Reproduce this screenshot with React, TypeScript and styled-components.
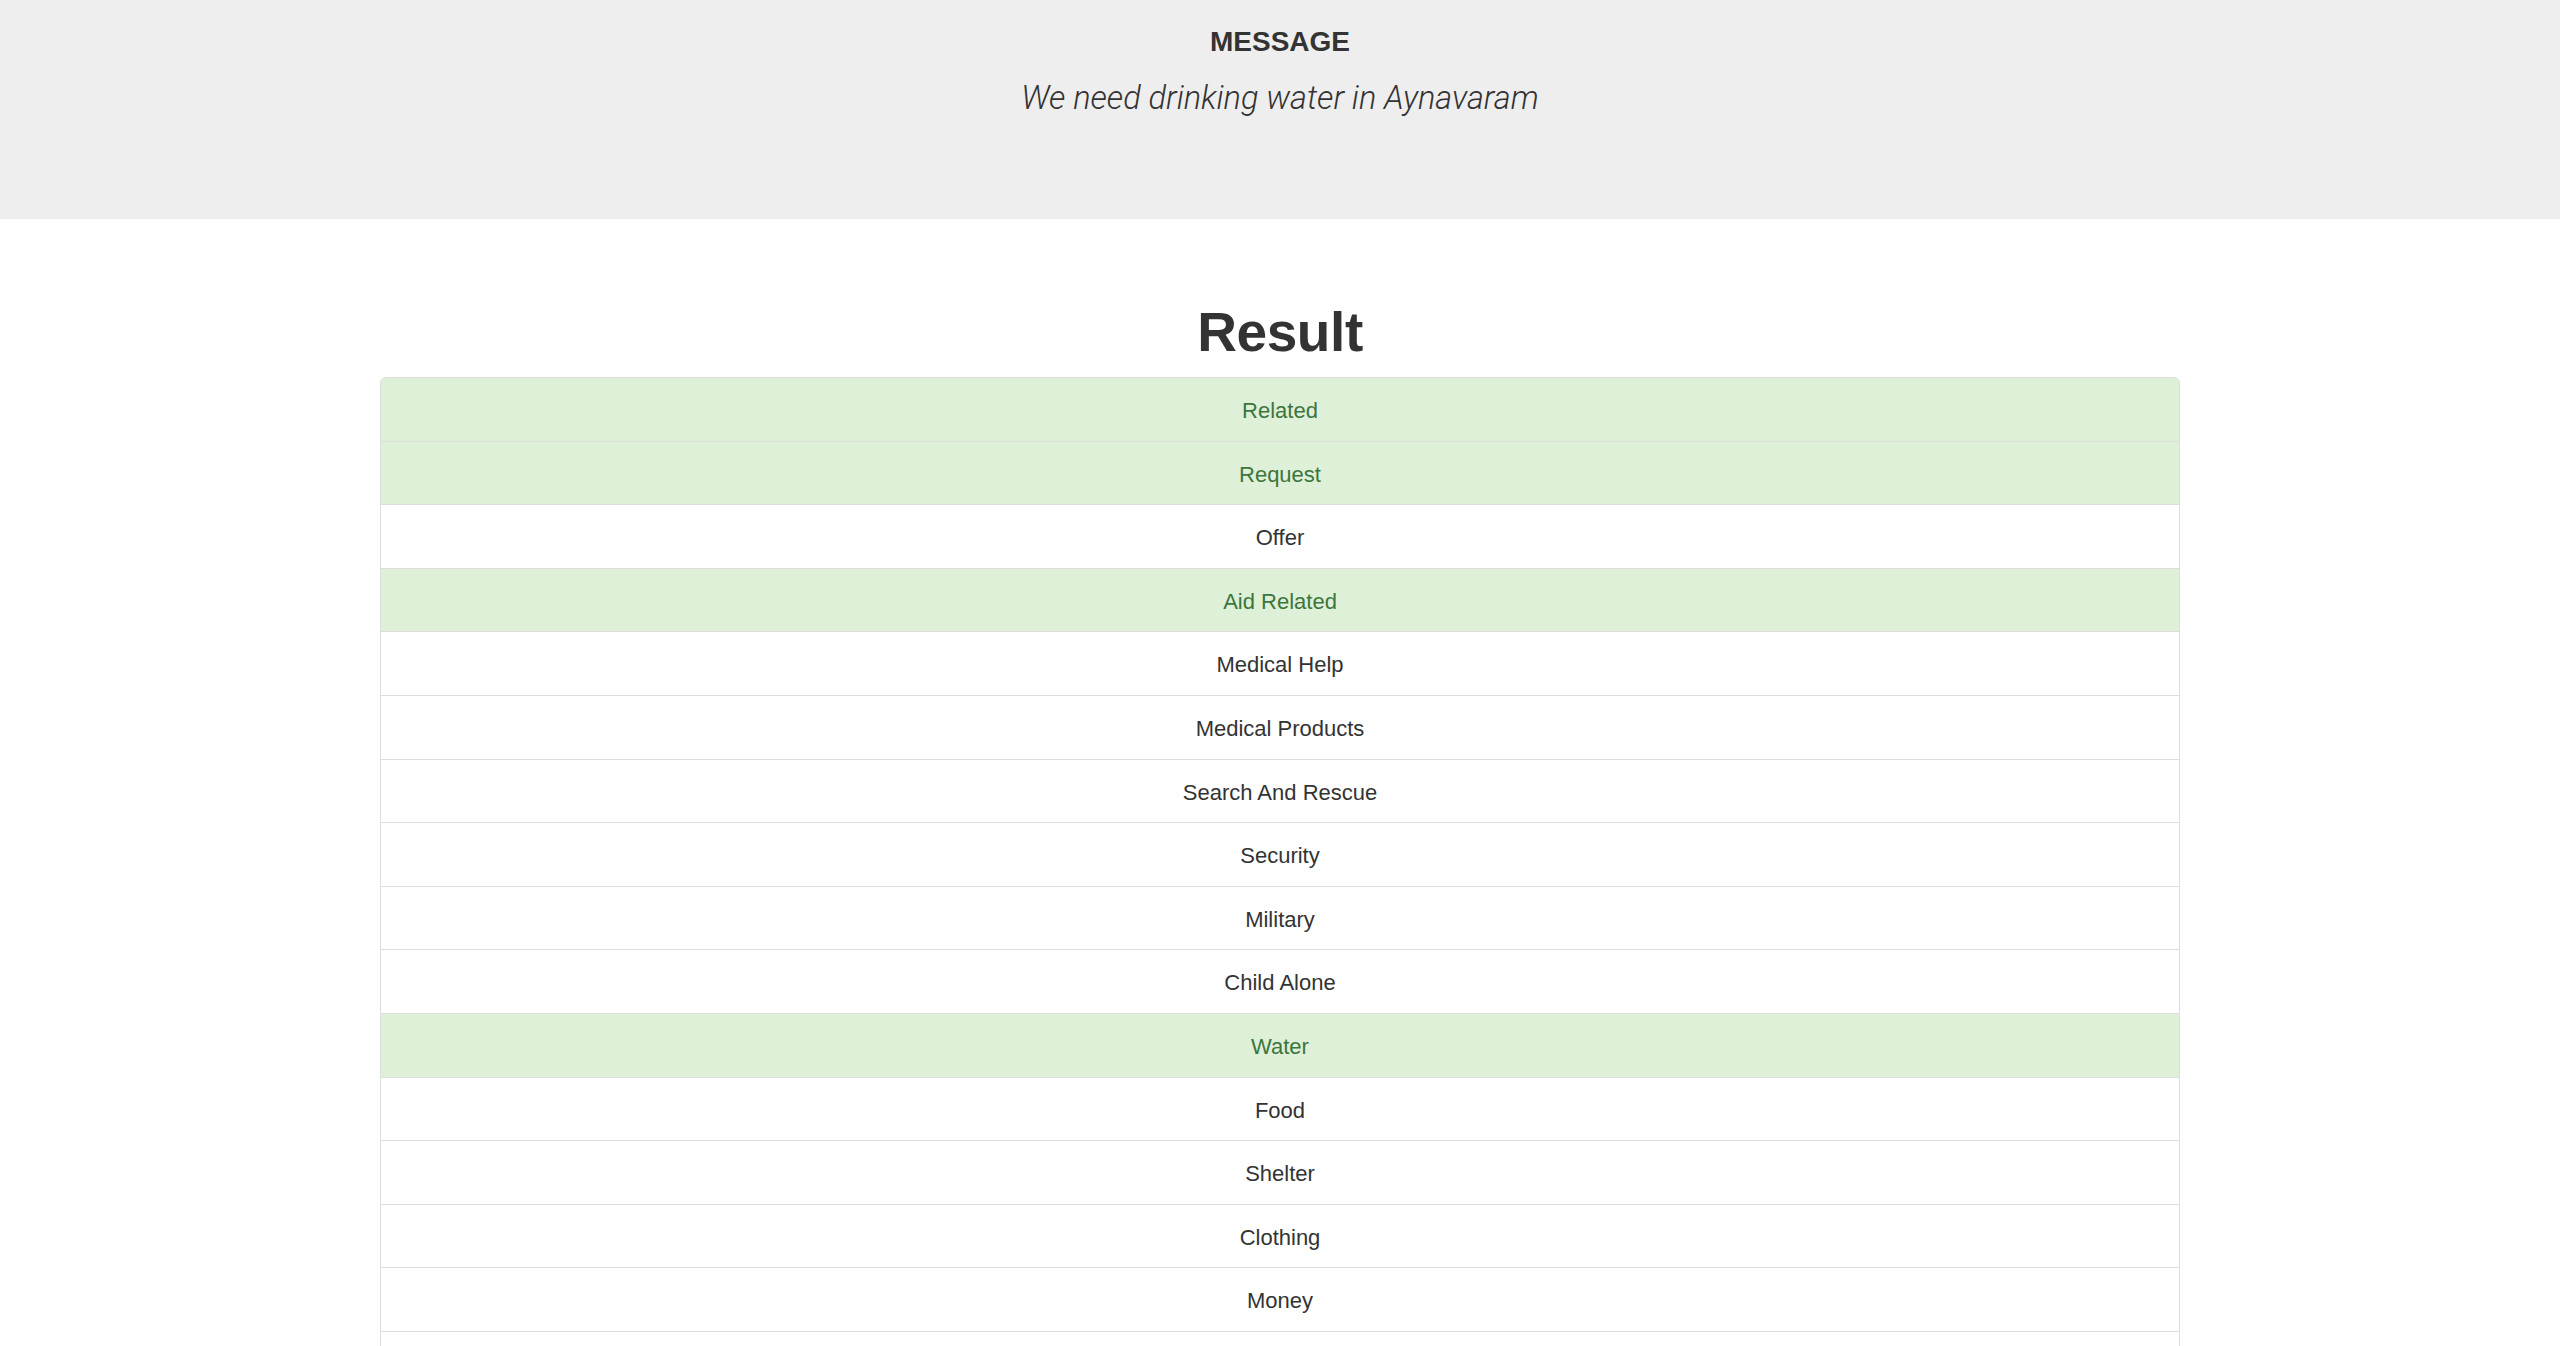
import React from "react";
import styled, { createGlobalStyle } from "styled-components";

const GlobalStyle = createGlobalStyle`
  html, body {
    margin: 0;
    padding: 0;
    background: #ffffff;
  }
  body {
    font-family: "Liberation Sans", Arial, Helvetica, sans-serif;
    color: #333333;
    font-size: 22px;
  }
  * { box-sizing: border-box; }
`;

const Jumbotron = styled.header`
  background: #eeeeee;
  height: 219px;
  padding-top: 27px;
  display: flex;
  flex-direction: column;
  align-items: center;
`;

const Label = styled.h4`
  margin: 0;
  font-size: 28px;
  line-height: 30.8px;
  font-weight: 700;
  color: #333333;
`;

const Message = styled.p`
  margin: 18.4px 0 0;
  font-family: Roboto, "Liberation Sans", sans-serif;
  font-style: italic;
  font-weight: 300;
  font-size: 32.5px;
  line-height: 44.8px;
  color: #333333;
`;

const Container = styled.main`
  width: 1800px;
  margin: 0 auto;
  padding-top: 83px;
  padding-bottom: 60px;
`;

const Title = styled.h1`
  margin: 0 0 14.5px;
  text-align: center;
  font-size: 55px;
  line-height: 60.5px;
  font-weight: 700;
  letter-spacing: -0.4px;
  color: #333333;
`;

const List = styled.ul`
  list-style: none;
  margin: 0;
  padding: 0;
`;

const Item = styled.li<{ $active: boolean }>`
  display: block;
  text-align: center;
  padding: 17px 23px 14.2px;
  line-height: 31.4px;
  font-size: 22px;
  border: 1px solid #dddddd;
  margin-bottom: -1px;
  background: ${(p) => (p.$active ? "#dff0d8" : "#ffffff")};
  color: ${(p) => (p.$active ? "#3c763d" : "#333333")};

  &:first-child {
    border-top-left-radius: 6px;
    border-top-right-radius: 6px;
  }
  &:last-child {
    margin-bottom: 0;
    border-bottom-left-radius: 6px;
    border-bottom-right-radius: 6px;
  }
`;

const results: [string, boolean][] = [
  ["Related", true],
  ["Request", true],
  ["Offer", false],
  ["Aid Related", true],
  ["Medical Help", false],
  ["Medical Products", false],
  ["Search And Rescue", false],
  ["Security", false],
  ["Military", false],
  ["Child Alone", false],
  ["Water", true],
  ["Food", false],
  ["Shelter", false],
  ["Clothing", false],
  ["Money", false],
  ["Missing People", false],
  ["Refugees", false],
  ["Death", false],
  ["Other Aid", false],
  ["Infrastructure Related", false],
  ["Transport", false],
  ["Buildings", false],
  ["Electricity", false],
  ["Tools", false],
  ["Hospitals", false],
  ["Shops", false],
  ["Aid Centers", false],
  ["Other Infrastructure", false],
  ["Weather Related", false],
  ["Floods", false],
  ["Storm", false],
  ["Fire", false],
  ["Earthquake", false],
  ["Cold", false],
  ["Other Weather", false],
  ["Direct Report", false],
];

export default function App() {
  return (
    <>
      <GlobalStyle />
      <Jumbotron>
        <Label>MESSAGE</Label>
        <Message>We need drinking water in Aynavaram</Message>
      </Jumbotron>
      <Container>
        <Title>Result</Title>
        <List>
          {results.map(([name, active]) => (
            <Item key={name} $active={active}>
              {name}
            </Item>
          ))}
        </List>
      </Container>
    </>
  );
}
